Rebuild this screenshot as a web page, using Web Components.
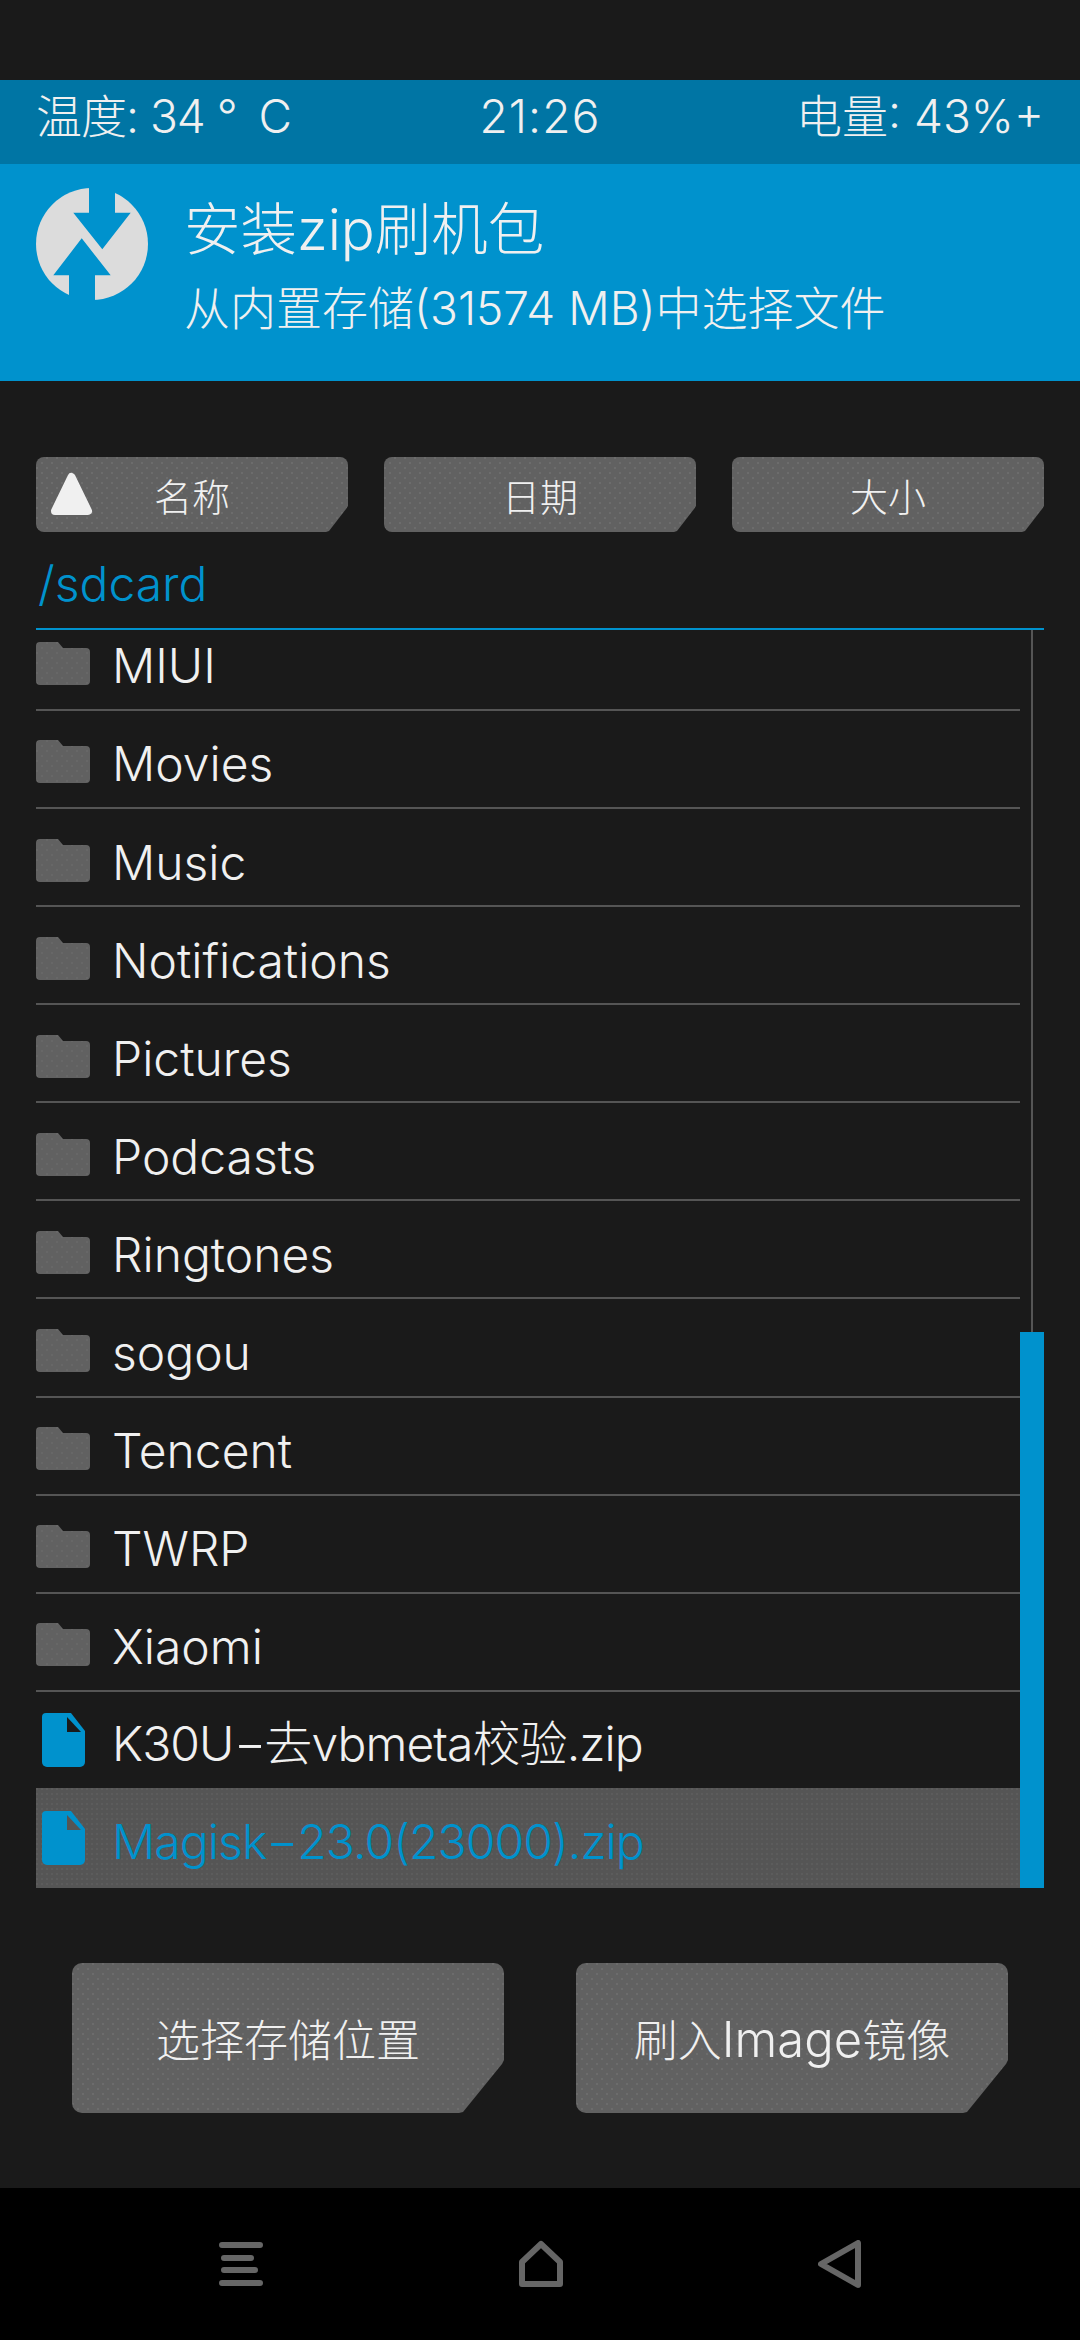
<!DOCTYPE html>
<html>
<head>
<meta charset="utf-8">
<title>TWRP</title>
<style>
  html, body { margin: 0; background: #1a1a1a; }
  body { font-family: Inter, "Noto Sans CJK SC", sans-serif; font-weight: 300; color: #f0f0f0; }
  .h { display: inline-block; transform: scaleX(1.5); margin: 0 5px; }
  .wide { font-size: 49px; }
</style>
</head>
<body>
<twrp-app>
  <twrp-status></twrp-status>
  <twrp-header title="安装zip刷机包" sub="从内置存储(31574 MB)中选择文件"></twrp-header>
  <twrp-sort>
    <twrp-button size="small" arrow>名称</twrp-button>
    <twrp-button size="small">日期</twrp-button>
    <twrp-button size="small">大小</twrp-button>
  </twrp-sort>
  <twrp-path>/sdcard</twrp-path>
  <twrp-list>
    <twrp-row>MIUI</twrp-row>
    <twrp-row>Movies</twrp-row>
    <twrp-row>Music</twrp-row>
    <twrp-row>Notifications</twrp-row>
    <twrp-row>Pictures</twrp-row>
    <twrp-row>Podcasts</twrp-row>
    <twrp-row>Ringtones</twrp-row>
    <twrp-row>sogou</twrp-row>
    <twrp-row>Tencent</twrp-row>
    <twrp-row>TWRP</twrp-row>
    <twrp-row>Xiaomi</twrp-row>
    <twrp-row file plain>K30U<span class="h">-</span>去vbmeta校验.zip</twrp-row>
    <twrp-row file selected plain>Magisk<span class="h">-</span>23.0(23000).zip</twrp-row>
  </twrp-list>
  <twrp-actions>
    <twrp-button>选择存储位置</twrp-button>
    <twrp-button>刷入<span class="wide">Image</span>镜像</twrp-button>
  </twrp-actions>
  <twrp-nav></twrp-nav>
</twrp-app>

<script>
// dotted texture used on the grey TWRP widgets
const DOTS = "radial-gradient(circle at 1px 1px, rgba(255,255,255,.07) .8px, transparent 1px)";
const FINE_DOTS = "radial-gradient(circle at 1px 1px, rgba(255,255,255,.04) .8px, transparent 1px)";

class TwrpApp extends HTMLElement {
  constructor() {
    super();
    this.attachShadow({ mode: "open" });
    this.shadowRoot.innerHTML = `
      <style>
        :host { display: flex; flex-direction: column; height: 2340px; padding-top: 80px; box-sizing: border-box; overflow: hidden; }
      </style>
      <slot></slot>`;
  }
}

class TwrpStatus extends HTMLElement {
  constructor() {
    super();
    this.attachShadow({ mode: "open" });
    this.shadowRoot.innerHTML = `
      <style>
        :host { display: grid; grid-template-columns: 1fr auto 1fr; align-items: center; height: 84px; padding: 0 36px; background: #0075a4; font-size: 46px; line-height: 72px; }
        .r { text-align: right; }
        div { padding-bottom: 12px; }
        .l { letter-spacing: -1px; }
        .c { letter-spacing: 1.2px; }
        .deg { display: inline-block; width: 30px; }
      </style>
      <div class="l">温度: 34 <span class="deg">°</span> C</div><div class="c">21:26</div><div class="r">电量: 43%+</div>`;
  }
}

class TwrpHeader extends HTMLElement {
  constructor() {
    super();
    this.attachShadow({ mode: "open" });
    this.shadowRoot.innerHTML = `
      <style>
        :host { display: flex; height: 217px; padding: 24px 36px 0; box-sizing: border-box; gap: 36px; background: #0092cd; }
        svg { width: 112px; height: 112px; flex: none; }
        .t { font-size: 56.5px; line-height: 80px; margin-top: 2px; }
        .s { font-size: 46px; line-height: 60px; margin-top: 8px; }
      </style>
      <svg viewBox="36 188 112 112">
        <circle cx="92" cy="244" r="56" fill="#dcdcdc"/>
        <path fill="#0092cd" d="M89 180V212.7H73.3L102.3 249.3 130.7 212.7H115V180Z"/>
        <path fill="#0092cd" d="M81.7 238.3 53.3 275.3H69V310H95V275.3H110.7Z"/>
      </svg>
      <div><div class="t"></div><div class="s"></div></div>`;
  }
  connectedCallback() {
    this.shadowRoot.querySelector(".t").textContent = this.getAttribute("title");
    this.shadowRoot.querySelector(".s").textContent = this.getAttribute("sub");
  }
}

class TwrpSort extends HTMLElement {
  constructor() {
    super();
    this.attachShadow({ mode: "open" });
    this.shadowRoot.innerHTML = `
      <style>
        :host { display: flex; gap: 36px; padding: 76px 36px 0; }
      </style>
      <slot></slot>`;
  }
}

class TwrpButton extends HTMLElement {
  constructor() {
    super();
    this.attachShadow({ mode: "open" });
    this.shadowRoot.innerHTML = `
      <style>
        :host { display: flex; position: relative; align-items: center; justify-content: center; width: 432px; height: 150px; font-size: 44px; border-radius: 10px;
          background-color: #616161; background-image: ${DOTS}, ${DOTS}; background-size: 10px 10px; background-position: 0 0, 5px 5px;
          clip-path: polygon(0 0, 100% 0, 100% calc(100% - 53px), calc(100% - 2px) calc(100% - 49px), calc(100% - 41px) calc(100% - 1px), calc(100% - 45px) 100%, 0 100%); }
        :host([size="small"]) { width: 312px; height: 75px; font-size: 38px; border-radius: 8px;
          clip-path: polygon(0 0, 100% 0, 100% calc(100% - 26px), calc(100% - 2px) calc(100% - 23px), calc(100% - 19px) calc(100% - 1px), calc(100% - 22px) 100%, 0 100%); }
        svg { position: absolute; left: 14px; top: 15px; width: 44px; height: 44px; }
        .label { display: flex; align-items: baseline; }
      </style>
      <div class="label"><slot></slot></div>`;
    if (this.hasAttribute("arrow")) {
      this.shadowRoot.innerHTML += `<svg viewBox="0 0 44 44"><path fill="#f0f0f0" stroke="#f0f0f0" stroke-width="8" stroke-linejoin="round" d="M21.5 5 38 39H5Z"/></svg>`;
    }
  }
}

class TwrpPath extends HTMLElement {
  constructor() {
    super();
    this.attachShadow({ mode: "open" });
    this.shadowRoot.innerHTML = `
      <style>
        :host { display: block; margin: 0 36px; height: 98px; box-sizing: border-box; padding: 16px 2px 0; border-bottom: 2px solid #0092cd; color: #0092cd; font-size: 48px; line-height: 72px; }
      </style>
      <slot></slot>`;
  }
}

class TwrpList extends HTMLElement {
  constructor() {
    super();
    this.attachShadow({ mode: "open" });
    this.shadowRoot.innerHTML = `
      <style>
        :host { display: grid; grid-template-columns: 984px 24px; margin: 0 36px; height: 1258px; }
        .rows { display: flex; flex-direction: column; justify-content: flex-end; overflow: hidden; }
        .track { display: flex; flex-direction: column; }
        .line { flex: 1; width: 2px; margin-left: 11px; background: #555; }
        .thumb { height: 556px; background: #0092cd; }
      </style>
      <div class="rows"><slot></slot></div>
      <div class="track"><div class="line"></div><div class="thumb"></div></div>`;
  }
}

class TwrpRow extends HTMLElement {
  constructor() {
    super();
    this.attachShadow({ mode: "open" });
    const dark = this.hasAttribute("selected") ? "#555" : "#1a1a1a";
    const icon = this.hasAttribute("file")
      ? `<svg class="file" viewBox="0 0 43 54"><path fill="#0092cd" d="M4 0H29L43 18V49a5 5 0 0 1-5 5H5a5 5 0 0 1-5-5V4a4 4 0 0 1 4-4Z"/><path fill="${dark}" d="M25 4V19H39Z"/></svg>`
      : `<svg class="folder" viewBox="0 0 54 43">
          <defs><pattern id="d" width="10" height="10" patternUnits="userSpaceOnUse"><rect width="10" height="10" fill="#616161"/><circle cx="1" cy="1" r=".8" fill="#6f6f6f"/><circle cx="6" cy="6" r=".8" fill="#6f6f6f"/></pattern></defs>
          <path fill="url(#d)" d="M4 0H22L27 6H50a4 4 0 0 1 4 4V39a4 4 0 0 1-4 4H4a4 4 0 0 1-4-4V4a4 4 0 0 1 4-4Z"/></svg>`;
    this.shadowRoot.innerHTML = `
      <style>
        :host { display: flex; flex: none; align-items: center; height: 98.1px; padding-top: 2px; box-sizing: border-box; border-bottom: 2px solid #555; font-size: 48px; }
        :host([plain]) { border-bottom: 0; padding-top: 0; height: 96.2px; letter-spacing: -.9px; }
        :host([selected]) { height: 100px; color: #0092cd; background-color: #555; background-image: ${FINE_DOTS}; background-size: 5px 5px; }
        svg { flex: none; }
        .folder { width: 54px; height: 43px; margin: 4px 22px 0 0; }
        .file { width: 43px; height: 54px; margin: 0 27px 0 6px; }
        span { margin-top: 8px; }
        :host([plain]) span { margin-top: 0; }
        :host([selected]) span { margin-top: 6px; }
      </style>
      ${icon}<span><slot></slot></span>`;
  }
}

class TwrpActions extends HTMLElement {
  constructor() {
    super();
    this.attachShadow({ mode: "open" });
    this.shadowRoot.innerHTML = `
      <style>
        :host { display: flex; justify-content: space-between; padding: 75px 72px; }
      </style>
      <slot></slot>`;
  }
}

class TwrpNav extends HTMLElement {
  constructor() {
    super();
    this.attachShadow({ mode: "open" });
    this.shadowRoot.innerHTML = `
      <style>
        :host { display: flex; flex: 1; background: #000; padding: 52px 218px 0 219px; justify-content: space-between; align-items: flex-start; }
        svg { width: 44px; height: 48px; fill: none; stroke: #666; stroke-width: 6; stroke-linecap: round; stroke-linejoin: round; }
      </style>
      <svg viewBox="0 0 44 48"><path d="M3 5H41M5 18H32M5 30H36M3 43H41"/></svg>
      <svg viewBox="0 0 44 48"><path d="M22 4 41 22V44H3V22Z"/></svg>
      <svg viewBox="0 0 44 48"><path d="M40 3V45L3 24Z"/></svg>`;
  }
}

customElements.define("twrp-app", TwrpApp);
customElements.define("twrp-status", TwrpStatus);
customElements.define("twrp-header", TwrpHeader);
customElements.define("twrp-sort", TwrpSort);
customElements.define("twrp-button", TwrpButton);
customElements.define("twrp-path", TwrpPath);
customElements.define("twrp-list", TwrpList);
customElements.define("twrp-row", TwrpRow);
customElements.define("twrp-actions", TwrpActions);
customElements.define("twrp-nav", TwrpNav);
</script>
</body>
</html>
